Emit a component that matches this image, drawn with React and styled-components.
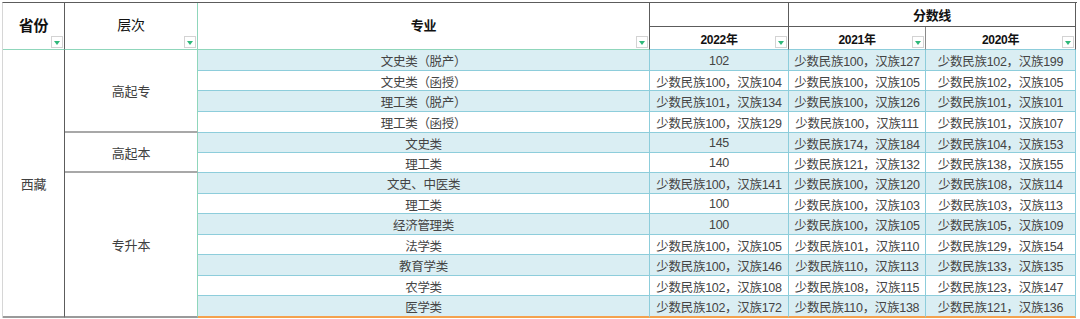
import React from "react";
import styled, { createGlobalStyle } from "styled-components";

const GlobalStyle = createGlobalStyle`
  html, body {
    margin: 0;
    padding: 0;
    background: #ffffff;
    overflow: hidden;
  }
`;

const DARK = "#5c5c5c";
const GREEN = "#8fd6bb";
const TEAL = "#8dcddb";

const Sheet = styled.div`
  margin: 2px 0 0 2px;
  width: 1074px;
  display: grid;
  grid-template-columns: 62px 133px 452px 139px 137px 150px;
  grid-template-rows: 24px 23px 21px 20px 21px 21px 20px 20px 21px 20px 21px 20px 21px 20px 22px;
  border-top: 1px solid ${DARK};
  border-left: 1px solid #d6d6d6;
  font-family: "Liberation Sans", "Noto Sans CJK SC", sans-serif;
`;

const Cell = styled.div`
  position: relative;
  box-sizing: border-box;
  display: flex;
  align-items: center;
  justify-content: center;
  white-space: nowrap;
  background: #ffffff;
`;

const HeadCell = styled(Cell)`
  grid-row: span ${(p) => p.$rows || 1};
  grid-column: span ${(p) => p.$cols || 1};
  border-right: 1px solid ${(p) => p.$right || DARK};
  border-bottom: 1px solid ${(p) => p.$bottom || DARK};
  color: #111111;
  font-size: ${(p) => p.$size || 13}px;
  font-weight: ${(p) => (p.$light ? 400 : 700)};
  letter-spacing: -0.3px;
  padding-bottom: ${(p) => (p.$rows === 2 ? 4 : 0)}px;
`;

const FilterBtn = styled.span`
  position: absolute;
  right: 1px;
  bottom: 1px;
  width: 12px;
  height: 12px;
  box-sizing: border-box;
  border: 1px solid #d3d3d3;
  background: #ffffff;

  &::after {
    content: "";
    position: absolute;
    left: 2px;
    top: 4px;
    border-left: 3px solid transparent;
    border-right: 3px solid transparent;
    border-top: 4px solid #2fb87a;
  }
`;

const GroupCell = styled(Cell)`
  grid-row: span ${(p) => p.$rows};
  border-right: 1px solid ${(p) => p.$right};
  border-bottom: 2px solid ${(p) => p.$bottom || "#a8a8a8"};
  color: #404040;
  font-size: 13px;
  letter-spacing: -0.2px;
`;

const DataCell = styled(Cell)`
  background: ${(p) => (p.$alt ? "#daeef3" : "#ffffff")};
  border-right: 1px solid ${TEAL};
  border-bottom: ${(p) => (p.$last ? "2px solid #f4a14e" : `1px solid ${TEAL}`)};
  color: #444444;
  font-size: 12.5px;
  letter-spacing: -0.3px;
  padding-top: 1px;
`;

const levels = [
  { name: "高起专", rows: 4 },
  { name: "高起本", rows: 2 },
  { name: "专升本", rows: 7 },
];

const rows = [
  ["文史类（脱产）", "102", "少数民族100，汉族127", "少数民族102，汉族199"],
  ["文史类（函授）", "少数民族100，汉族104", "少数民族100，汉族105", "少数民族102，汉族105"],
  ["理工类（脱产）", "少数民族101，汉族134", "少数民族100，汉族126", "少数民族101，汉族101"],
  ["理工类（函授）", "少数民族100，汉族129", "少数民族100，汉族111", "少数民族101，汉族107"],
  ["文史类", "145", "少数民族174，汉族184", "少数民族104，汉族153"],
  ["理工类", "140", "少数民族121，汉族132", "少数民族138，汉族155"],
  ["文史、中医类", "少数民族100，汉族141", "少数民族100，汉族120", "少数民族108，汉族114"],
  ["理工类", "100", "少数民族100，汉族103", "少数民族103，汉族113"],
  ["经济管理类", "100", "少数民族100，汉族105", "少数民族105，汉族109"],
  ["法学类", "少数民族100，汉族105", "少数民族101，汉族110", "少数民族129，汉族154"],
  ["教育学类", "少数民族100，汉族146", "少数民族110，汉族113", "少数民族133，汉族135"],
  ["农学类", "少数民族102，汉族108", "少数民族108，汉族115", "少数民族123，汉族147"],
  ["医学类", "少数民族102，汉族172", "少数民族110，汉族138", "少数民族121，汉族136"],
];

export default function App() {
  let levelStart = 0;
  const levelAt = {};
  levels.forEach((lv, i) => {
    levelAt[levelStart] = { ...lv, last: i === levels.length - 1 };
    levelStart += lv.rows;
  });

  return (
    <>
      <GlobalStyle />
      <Sheet>
        <HeadCell $rows={2} $size={15} $bottom={GREEN}>
          省份
          <FilterBtn />
        </HeadCell>
        <HeadCell $rows={2} $size={14} $light $right={GREEN} $bottom={GREEN}>
          层次
          <FilterBtn />
        </HeadCell>
        <HeadCell $rows={2} $bottom={GREEN}>
          专业
          <FilterBtn />
        </HeadCell>
        <HeadCell />
        <HeadCell $cols={2}>分数线</HeadCell>
        <HeadCell $size={12} $bottom={TEAL}>
          2022年
          <FilterBtn />
        </HeadCell>
        <HeadCell $size={12} $right="#8a8a8a" $bottom={TEAL}>
          2021年
          <FilterBtn />
        </HeadCell>
        <HeadCell $size={12} $bottom={TEAL}>
          2020年
          <FilterBtn />
        </HeadCell>

        {rows.map((row, i) => {
          const last = i === rows.length - 1;
          const lv = levelAt[i];
          return (
            <React.Fragment key={i}>
              {i === 0 && (
                <GroupCell $rows={rows.length} $right={DARK} $bottom="#9a9a9a">
                  西藏
                </GroupCell>
              )}
              {lv && (
                <GroupCell $rows={lv.rows} $right={GREEN} $bottom={lv.last ? "#9a9a9a" : "#a8a8a8"}>
                  {lv.name}
                </GroupCell>
              )}
              {row.map((text, j) => (
                <DataCell key={j} $alt={i % 2 === 0} $last={last}>
                  {text}
                </DataCell>
              ))}
            </React.Fragment>
          );
        })}
      </Sheet>
    </>
  );
}
